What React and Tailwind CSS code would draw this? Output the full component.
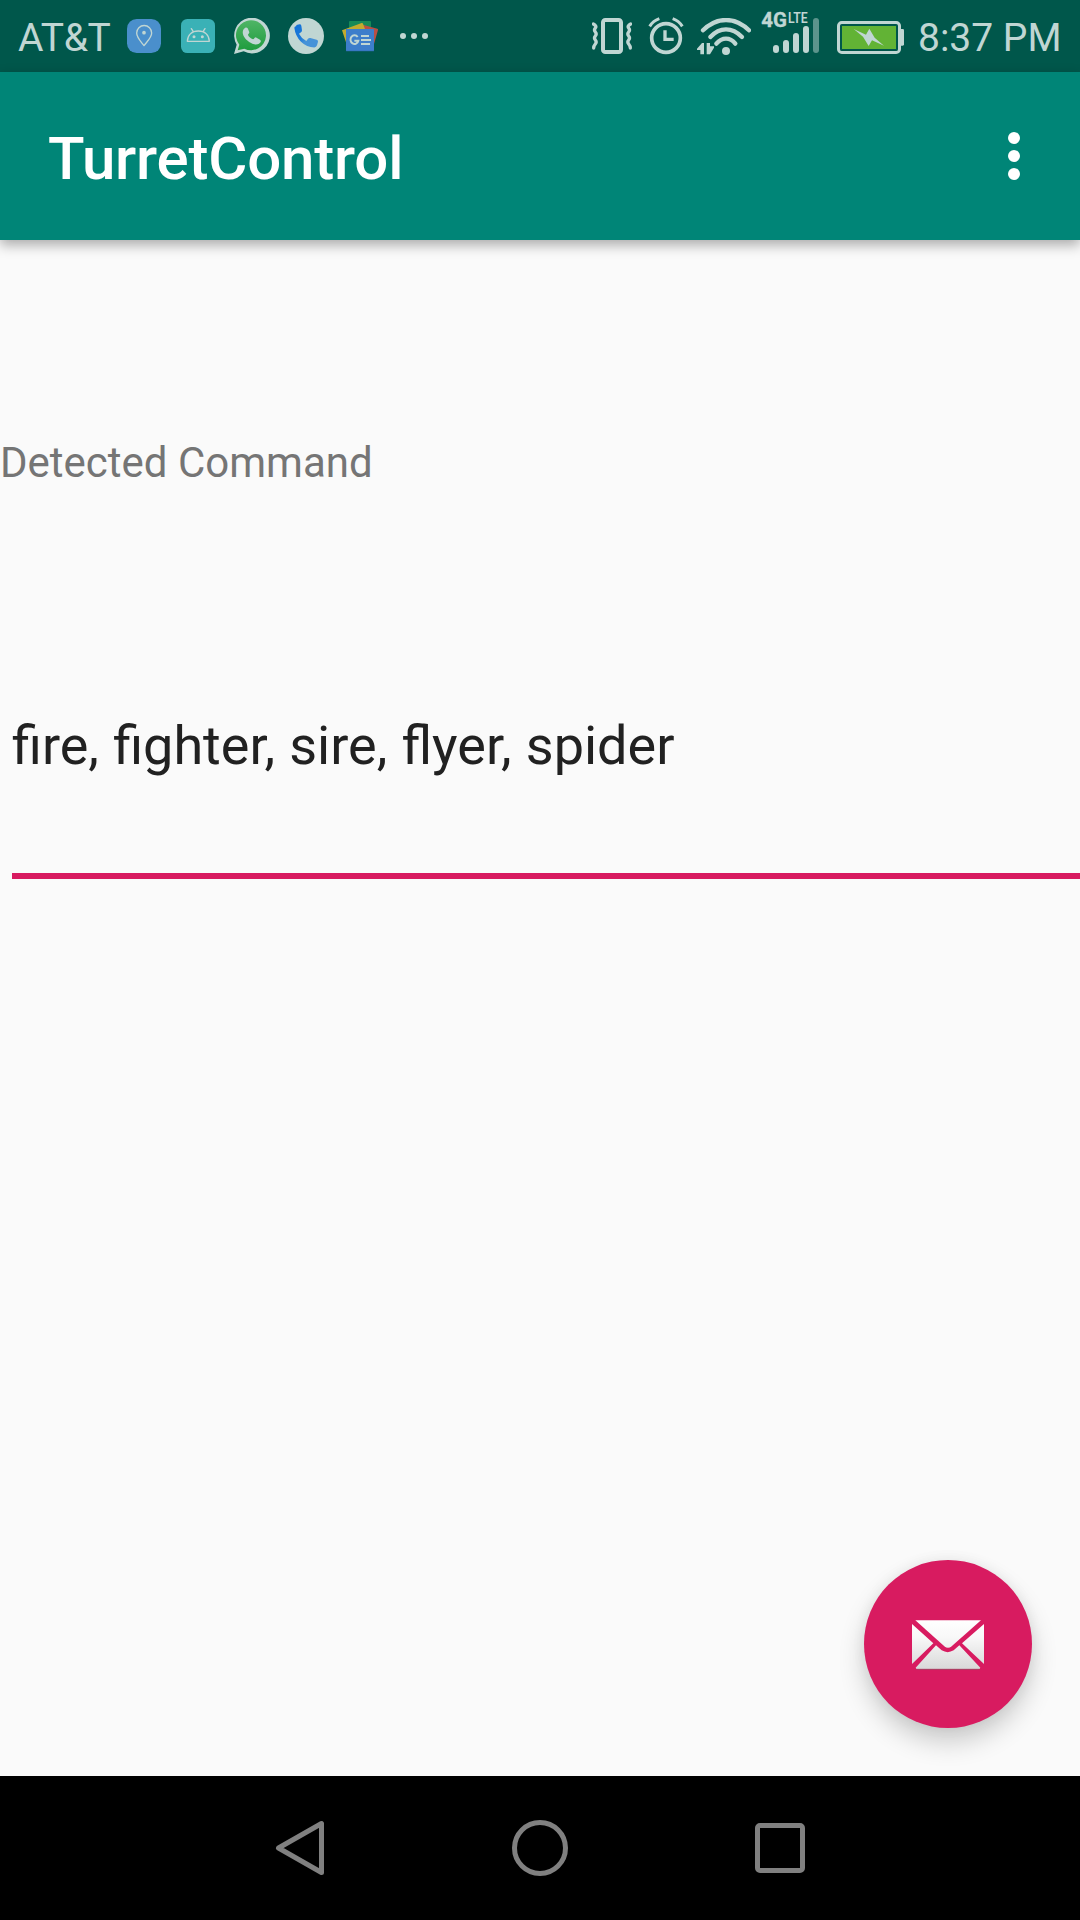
import React from "react";

const INK = "#c0d6d3";

function PinIcon() {
  return (
    <svg className="h-[34px] w-[34px] shrink-0" viewBox="381 57 102 102">
      <rect x="381" y="57" width="102" height="102" rx="29" fill="#4a8fcc" />
      <path d="M432 137C424 126 410 113 410 99a22 22 0 0 1 45 0c0 14-15 27-23 38z" fill="none" stroke={INK} strokeWidth="4" strokeLinejoin="round" />
      <circle cx="432" cy="98" r="5.5" fill={INK} />
    </svg>
  );
}

function AndroidIcon() {
  return (
    <svg className="ml-5 h-[34px] w-[34px] shrink-0" viewBox="543 57 102 102">
      <rect x="543" y="57" width="102" height="102" rx="19" fill="#3ab1b6" />
      <path d="M562 124c1-20 14-31 33-31s32 11 33 31z" fill="none" stroke={INK} strokeWidth="4" strokeLinejoin="round" />
      <path d="M580 95l-6-9M609 95l6-9" stroke={INK} strokeWidth="4" strokeLinecap="round" />
      <circle cx="582" cy="110" r="4.5" fill={INK} />
      <circle cx="607" cy="110" r="4.5" fill={INK} />
    </svg>
  );
}

function WhatsAppIcon() {
  return (
    <svg className="ml-[19px] h-9 w-9 shrink-0" viewBox="42 54 108 108">
      <defs>
        <linearGradient id="wa" x1="0" y1="0" x2="0" y2="1">
          <stop offset="0" stopColor="#4fb566" />
          <stop offset="1" stopColor="#1f9c3e" />
        </linearGradient>
      </defs>
      <path d="M42 162l8-28A53.500 53.500 0 1 1 71 154z" fill={INK} />
      <path d="M53 151l5-17A45 45 0 1 1 73 146z" fill="url(#wa)" />
      <path d="M75 84c5-3 8 0 10 5l3 8c0 3-4 6-4 8 3 6 8 10 15 13 3 0 5-6 8-6l13 7c5 3 2 9-3 12-6 3-12 3-20 0-13-5-25-17-28-28-2-8 0-16 6-19z" fill={INK} />
    </svg>
  );
}

function PhoneIcon() {
  return (
    <svg className="ml-[18px] h-9 w-9 shrink-0" viewBox="204 54 108 108">
      <defs>
        <linearGradient id="ph" x1="0" y1="0" x2="1" y2="1">
          <stop offset="0" stopColor="#0f70d8" />
          <stop offset=".45" stopColor="#1e7bd8" />
          <stop offset=".6" stopColor="#4692d8" />
        </linearGradient>
      </defs>
      <circle cx="258" cy="108" r="54" fill={INK} />
      <path d="M229 75l10-2q4 0 5 4l2 14q0 4-3 6l-6 4q7 14 22 22l5-7q3-3 7-2l19 5q5 1 4 6l-3 11q-2 6-8 6.500-23 0-40-17t-20-42q0-4 6-5.500z" fill="url(#ph)" />
    </svg>
  );
}

function NewsIcon() {
  return (
    <svg className="ml-[18px] h-9 w-9 shrink-0" viewBox="366 54 108 108">
      <rect x="387" y="63" width="66" height="40" rx="3" fill="#178a57" />
      <path d="M420 72l52 14q3 1 2 4l-13 46-50-14z" fill="#b94f43" />
      <path d="M366 91l59-22q3-1 4 2l18 48-64 23z" fill="#c2ab2e" />
      <rect x="378" y="87" width="84" height="67" rx="2" fill="#2f65ad" />
      <rect x="378" y="87" width="84" height="65" rx="2" fill="#3d7ecb" />
      <path d="M413 111a12 13 0 1 0 2 11h-12" fill="none" stroke={INK} strokeWidth="6" />
      <path d="M423 108h24M423 120h30M423 132h27" stroke={INK} strokeWidth="6" />
    </svg>
  );
}

function VibrateIcon() {
  return (
    <svg className="h-9 w-10 shrink-0" viewBox="36 54 120 108" fill="none" stroke={INK}>
      <rect x="69" y="60" width="54" height="96" rx="7" strokeWidth="12" />
      <path d="M40 72q11 6 6 12t0 12 0 12 0 12 0 12-5 12" strokeWidth="10" strokeLinecap="round" />
      <path d="M152 72q-11 6-6 12t0 12 0 12 0 12 0 12 5 12" strokeWidth="10" strokeLinecap="round" />
    </svg>
  );
}

function AlarmIcon() {
  return (
    <svg className="ml-4 h-9 w-9 shrink-0 overflow-visible" viewBox="204 54 108 108" fill="none" stroke={INK}>
      <circle cx="258" cy="114" r="43" strokeWidth="11" />
      <path d="M255 91v27h26" strokeWidth="10" />
      <path d="M209 79q10-16 29-23M307 79q-10-16-29-23" strokeWidth="9" />
    </svg>
  );
}

function WifiIcon() {
  return (
    <svg className="ml-[13px] mt-[18px] h-[37px] w-[54px] shrink-0 self-start" viewBox="351 54 162 111">
      <g fill="none" stroke={INK} strokeWidth="13" strokeLinecap="round">
        <path d="M369 91Q400 60 438 60T507 91" />
        <path d="M391 111Q412 88 438 88T486 111" />
        <path d="M409 131Q422 116 438 116T466 131" />
      </g>
      <circle cx="438" cy="153" r="12" fill={INK} />
      <path d="M372 129v34h-11v-13h-10v-4l15-17zM380 129h10v10h12v4l-12 20h-10z" fill={INK} />
    </svg>
  );
}

function SignalIcon() {
  return (
    <svg className="ml-2.5 h-[72px] w-[60px] shrink-0 overflow-visible" viewBox="543 0 180 216">
      <g stroke={INK} strokeWidth="18" strokeLinecap="round">
        <path d="M588 144v6M618 129v21M648 108v42M678 87v63" />
        <path d="M708 63v87" opacity=".48" />
      </g>
      <text x="544" y="80" fill={INK} stroke={INK} strokeWidth="1" fontFamily="Roboto, sans-serif" fontWeight="700" fontSize="59" textLength="77" lengthAdjust="spacingAndGlyphs">4G</text>
      <text x="624" y="68" fill={INK} fontFamily="Roboto, sans-serif" fontWeight="600" fontSize="44" textLength="59" lengthAdjust="spacingAndGlyphs">LTE</text>
    </svg>
  );
}

function BatteryIcon() {
  return (
    <svg className="ml-4 mt-[3px] h-[33px] w-[67px] shrink-0" viewBox="51 63 201 99">
      <rect x="55.500" y="67.500" width="183" height="90" rx="10" fill="none" stroke={INK} strokeWidth="9" />
      <path d="M243 87h5q4 0 4 4v42q0 4-4 4h-5z" fill={INK} />
      <rect x="66" y="78" width="162" height="69" fill="#62b335" />
      <path d="M101 87l37 17 10-18 16 27 28 24-36-16-10 17-17-28z" fill={INK} />
    </svg>
  );
}

function StatusBar() {
  return (
    <header className="flex h-[72px] shrink-0 items-center bg-[#00574b] pl-[18px] text-[39px] leading-[72px] text-[#c0d6d3]">
      <span className="w-[109px] shrink-0 whitespace-nowrap pt-[3px] tracking-[-0.3px]">AT&amp;T</span>
      <PinIcon />
      <AndroidIcon />
      <WhatsAppIcon />
      <PhoneIcon />
      <NewsIcon />
      <div className="ml-[22px] flex gap-[5px]">
        <i className="size-1.5 rounded-full bg-[#c0d6d3]" />
        <i className="size-1.5 rounded-full bg-[#c0d6d3]" />
        <i className="size-1.5 rounded-full bg-[#c0d6d3]" />
      </div>
      <div className="ml-[164px] flex h-full items-center">
        <VibrateIcon />
        <AlarmIcon />
        <WifiIcon />
        <SignalIcon />
        <BatteryIcon />
        <span className="ml-[14px] whitespace-nowrap pt-[3px]">8:37 PM</span>
      </div>
    </header>
  );
}

function MailButton() {
  return (
    <button aria-label="Mail" className="flex size-[168px] items-center justify-center rounded-full bg-[#d81b60] pt-px shadow-[0_14px_26px_rgba(0,0,0,0.19),0_0_14px_rgba(0,0,0,0.06)]">
      <svg className="h-[50px] w-[72px]" viewBox="216 239 216 150">
        <defs>
          <linearGradient id="mail" x1="0" y1="239" x2="0" y2="389" gradientUnits="userSpaceOnUse">
            <stop offset="0" stopColor="#ffffff" />
            <stop offset=".35" stopColor="#f8f8f8" />
            <stop offset="1" stopColor="#d8d8d8" />
          </linearGradient>
        </defs>
        <g fill="url(#mail)">
          <path d="M226 240h197l-88 78q-11 9-22 0z" />
          <path d="M216 251l64 58-64 62zM432 251l-66 58 66 62z" />
          <path d="M288 315l17 15q18 11 36 0l17-15 63 67q-2 5-6 5H233q-4 0-6-5z" />
        </g>
        <path d="M230 387h188" stroke="#a63b5e" strokeWidth="3" />
      </svg>
    </button>
  );
}

function NavigationBar() {
  return (
    <nav className="flex h-36 shrink-0 items-center bg-black pl-[275px]">
      <svg className="h-14 w-[50px]" viewBox="0 0 50 56" fill="none" stroke="#808080" strokeWidth="5" strokeLinejoin="round">
        <path d="M46.500 3.500v49L3.500 28z" />
      </svg>
      <div className="ml-[187px] size-14 rounded-full border-[5px] border-[#808080]" />
      <div className="ml-[187px] size-[50px] rounded-[5px] border-[5px] border-[#808080]" />
    </nav>
  );
}

export default function App() {
  return (
    <div className="flex h-[1920px] w-[1080px] flex-col overflow-hidden bg-[#fafafa] font-[Roboto,sans-serif]">
      <StatusBar />
      <div className="z-10 flex h-[168px] shrink-0 items-start justify-between bg-[#008577] pl-12 pr-[60px] shadow-[0_5px_12px_rgba(0,0,0,0.32)]">
        <h1 className="pt-[52px] text-[60px] font-medium leading-[70px] tracking-[-0.2px] text-white">TurretControl</h1>
        <button aria-label="More options" className="mt-[60px] flex flex-col gap-1.5">
          <i className="size-3 rounded-full bg-white" />
          <i className="size-3 rounded-full bg-white" />
          <i className="size-3 rounded-full bg-white" />
        </button>
      </div>
      <main className="flex grow flex-col">
        <p className="mt-[198px] text-[42px] leading-[50px] text-[#757575]">Detected Command</p>
        <div className="ml-3 mt-[226px] h-[165px] shrink-0 border-b-[6px] border-[#d81b60] text-[54px] leading-[64px] text-[#212121] [word-spacing:0.75px]">
          fire, fighter, sire, flyer, spider
        </div>
        <div className="mb-12 mr-12 mt-auto flex justify-end">
          <MailButton />
        </div>
      </main>
      <NavigationBar />
    </div>
  );
}
